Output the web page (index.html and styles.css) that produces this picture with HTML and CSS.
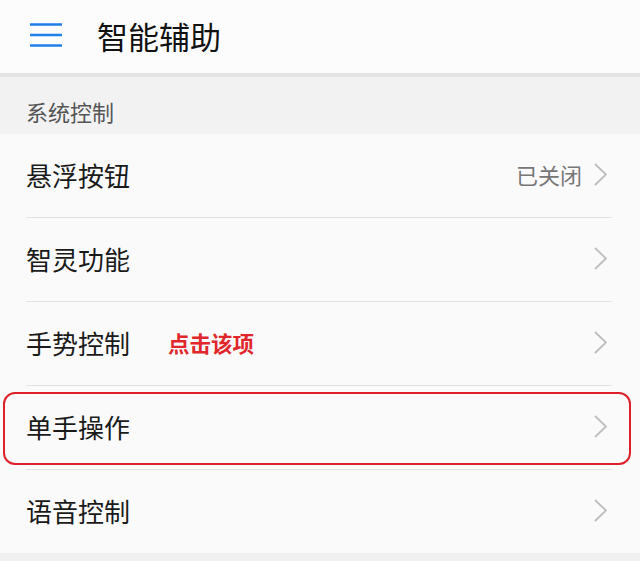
FILE: index.html
```html
<!DOCTYPE html>
<html lang="zh-CN">
<head>
  <meta charset="UTF-8">
  <title>智能辅助</title>
  <link rel="stylesheet" href="styles.css">
</head>
<body>

  <header class="topbar">
    <svg class="menu-icon" width="32" height="26" viewBox="0 0 32 26">
      <path d="M0 2.5H32M0 13H32M0 23.5H32" stroke="#1f7fe8" stroke-width="2.6" fill="none"/>
    </svg>
    <h1>智能辅助</h1>
  </header>

  <div class="section-title">系统控制</div>

  <ul class="settings">
    <li>
      <div class="row">
        <span class="label">悬浮按钮</span>
        <span class="status">已关闭</span>
        <svg class="chevron" width="13" height="23" viewBox="0 0 13 23"><path d="M1 1L12 11.5L1 22"/></svg>
      </div>
    </li>
    <li>
      <div class="row">
        <span class="label">智灵功能</span>
        <svg class="chevron" width="13" height="23" viewBox="0 0 13 23"><path d="M1 1L12 11.5L1 22"/></svg>
      </div>
    </li>
    <li>
      <div class="row">
        <span class="label">手势控制</span>
        <span class="hint">点击该项</span>
        <svg class="chevron" width="13" height="23" viewBox="0 0 13 23"><path d="M1 1L12 11.5L1 22"/></svg>
      </div>
    </li>
    <li class="marked">
      <div class="row">
        <span class="label">单手操作</span>
        <svg class="chevron" width="13" height="23" viewBox="0 0 13 23"><path d="M1 1L12 11.5L1 22"/></svg>
      </div>
      <!-- annotation box drawn over the row -->
      <div class="highlight"></div>
    </li>
    <li>
      <div class="row last">
        <span class="label">语音控制</span>
        <svg class="chevron" width="13" height="23" viewBox="0 0 13 23"><path d="M1 1L12 11.5L1 22"/></svg>
      </div>
    </li>
  </ul>

  <div class="bottom-gap"></div>

</body>
</html>
```

FILE: styles.css
```css
body {
  margin: 0;
  font-family: "Noto Sans CJK SC", "Noto Sans", sans-serif;
  background: #fafafa;
  color: #1a1a1a;
}
.topbar {
  height: 77px;
  box-sizing: border-box;
  padding: 0 0 3px 30px;
  display: flex;
  align-items: center;
  background: #fcfcfc;
  border-bottom: 4px solid #e4e4e4;
}
.menu-icon {
  display: block;
  margin-top: -1px;
}
.topbar h1 {
  margin: 0 0 0 35px;
  font-size: 31px;
  font-weight: normal;
  line-height: 1;
  color: #111;
}
.section-title {
  height: 57px;
  box-sizing: border-box;
  padding: 19px 0 0 26px;
  background: #f2f2f2;
  font-size: 22px;
  line-height: 30px;
  color: #555;
}
.settings {
  list-style: none;
  margin: 0;
  padding: 0;
  background: #fafafa;
}
.settings li {
  position: relative;
  padding-left: 26px;
}
.row {
  height: 84px;
  box-sizing: border-box;
  padding-bottom: 3px;
  display: flex;
  align-items: center;
  border-bottom: 1px solid #e3e3e3;
  margin-right: 28px;
}
.row.last {
  border-bottom: none;
  height: 83px;
}
.label {
  font-size: 26px;
  color: #1a1a1a;
}
.status {
  margin-left: auto;
  margin-right: 12px;
  font-size: 22px;
  color: #777;
}
.hint {
  margin-left: 38px;
  font-size: 21.5px;
  font-weight: bold;
  color: #e1262c;
}
.chevron {
  display: block;
  margin-left: auto;
  margin-right: 5px;
  fill: none;
  stroke: #bdbdbd;
  stroke-width: 1.8;
}
.status + .chevron {
  margin-left: 0;
}
.highlight {
  position: absolute;
  left: 3px;
  right: 9px;
  top: 6px;
  bottom: 5px;
  border: 2.5px solid #dd2029;
  border-radius: 12px;
}
.bottom-gap {
  height: 10px;
  background: #f0f0f0;
}
```
